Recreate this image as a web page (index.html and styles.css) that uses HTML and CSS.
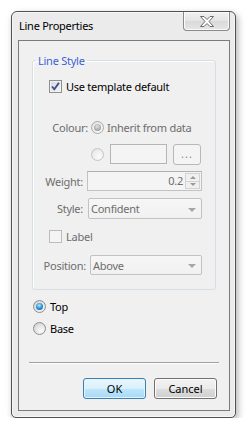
FILE: index.html
```html
<!DOCTYPE html>
<html lang="en">
  <head>
    <meta name="viewport" content="width=device-width, initial-scale=1.0" />
    <link rel="stylesheet" href="styles.css">
  </head>
  <body>
    <div class="window">
      <div class="titlebar">
        <span class="title">Line Properties</span>
        <div class="close">
          <svg width="14" height="11" viewBox="0 0 14 11">
            <polygon points="0.5,0.5 4,0.5 7,3.5 10,0.5 13.5,0.5 9,5.5 13.5,10.5 10,10.5 7,7.5 4,10.5 0.5,10.5 5,5.5"
              fill="#fff" stroke="#6b6b6b" stroke-width="1" stroke-linejoin="round" />
          </svg>
        </div>
      </div>

      <div class="client">
        <fieldset class="group">
          <legend>Line Style</legend>

          <div class="row check-row">
            <span class="checkbox">
              <svg width="11" height="11" viewBox="0 0 11 11">
                <path d="M2 5.5 L4.3 8.3 L9 1.8" fill="none" stroke="#3d528c" stroke-width="1.9" />
              </svg>
            </span>
            <span class="text">Use template default</span>
          </div>

          <div class="row colour-row">
            <span class="lbl">Colour:</span>
            <span class="radio dis on"></span>
            <span class="text dim">Inherit from data</span>
          </div>

          <div class="row custom-row">
            <span class="radio dis"></span>
            <span class="field"></span>
            <span class="tool-btn">...</span>
          </div>

          <div class="row weight-row">
            <span class="lbl">Weight:</span>
            <div class="spin">
              <span class="spin-value">0.2</span>
              <span class="spin-arrows">
                <span class="spin-up"></span>
                <span class="spin-down"></span>
              </span>
            </div>
          </div>

          <div class="row style-row">
            <span class="lbl">Style:</span>
            <div class="combo">
              <span class="combo-text">Confident</span>
              <span class="combo-arrow"></span>
            </div>
          </div>

          <div class="row label-row">
            <span class="checkbox dis"></span>
            <span class="text dim">Label</span>
          </div>

          <div class="row position-row">
            <span class="lbl">Position:</span>
            <div class="combo">
              <span class="combo-text">Above</span>
              <span class="combo-arrow"></span>
            </div>
          </div>
        </fieldset>

        <div class="radio-row top-row">
          <span class="radio on"></span>
          <span class="text">Top</span>
        </div>
        <div class="radio-row base-row">
          <span class="radio"></span>
          <span class="text">Base</span>
        </div>

        <div class="separator"></div>

        <div class="buttons">
          <button class="btn default">OK</button>
          <button class="btn">Cancel</button>
        </div>
      </div>
    </div>
  </body>
</html>
```

FILE: styles.css
```css
body {
  margin: 0;
  background: #fff;
  font-family: "Noto Sans", "Open Sans", sans-serif;
  font-size: 11px;
  letter-spacing: -0.25px;
  color: #000;
}

/* Window frame */
.window {
  margin: 11px 0 0 11px;
  width: 225px;
  height: 407px;
  box-sizing: border-box;
  border: 1px solid #515151;
  border-radius: 6px 6px 5px 5px;
  background: #ebebeb;
  padding: 0 5px 6px 6px;
  display: flex;
  flex-direction: column;
  box-shadow: inset 0 0 0 1px #f7f7f7, 2px 3px 7px rgba(0, 0, 0, 0.3);
}

.titlebar {
  height: 28px;
  flex: none;
  display: flex;
  justify-content: space-between;
  align-items: flex-start;
}

.title {
  padding: 6px 0 0 1px;
  line-height: 16px;
}

.close {
  width: 47px;
  height: 19px;
  box-sizing: border-box;
  border: 1px solid #8a8a8a;
  border-top: none;
  border-radius: 0 0 4px 4px;
  background: linear-gradient(#f1f1f1, #e4e4e4 50%, #d9d9d9 51%, #e6e6e6);
  box-shadow: inset 0 0 0 1px #fafafa;
  display: flex;
  align-items: center;
  justify-content: center;
}

.client {
  flex: 1;
  border: 1px solid #7b7b7b;
  background: #f0f0f0;
  display: flex;
  flex-direction: column;
}

/* Group box */
.group {
  margin: 12px 13px 0;
  padding: 8px 0 14px 0;
  border: 1px solid #d5dfe5;
  border-radius: 3px;
  box-shadow: inset 1px 1px 0 #fff;
  min-width: 0;
}

.group legend {
  margin-left: 3px;
  padding: 0 2px;
  line-height: 15px;
  color: #3b5fd4;
}

.row {
  display: flex;
  align-items: center;
  height: 20px;
  padding-right: 13px;
}

.text {
  line-height: 15px;
  margin-left: 4px;
}

.dim,
.lbl {
  color: #6d6d6d;
}

.lbl {
  flex: none;
  text-align: right;
  line-height: 15px;
}

.check-row {
  padding-left: 16px;
}

.colour-row {
  margin-top: 21px;
}

.colour-row .lbl {
  width: 55px;
  margin-right: 3px;
}

.colour-row .text {
  margin-left: 3px;
}

.custom-row {
  margin-top: 7px;
  padding-left: 58px;
}

.weight-row {
  margin-top: 7px;
}

.weight-row .lbl,
.style-row .lbl {
  width: 50px;
  margin-right: 4px;
}

.style-row {
  margin-top: 7px;
  height: 21px;
}

.style-row .lbl {
  margin-right: 5px;
}

.label-row {
  margin-top: 7px;
  padding-left: 16px;
}

.position-row {
  margin-top: 9px;
}

.position-row .lbl {
  width: 53px;
  margin-right: 4px;
}

/* Check boxes and radio buttons */
.checkbox {
  flex: none;
  width: 13px;
  height: 13px;
  box-sizing: border-box;
  border: 1px solid #8e8f8f;
  background: linear-gradient(135deg, #d4d7db, #f7f7f7);
  box-shadow: inset 0 0 0 1px #f2f2f2;
  display: flex;
  align-items: center;
  justify-content: center;
}

.checkbox.dis {
  border-color: #bcbcbc;
  background: #f4f4f4;
  box-shadow: none;
}

.radio {
  flex: none;
  width: 13px;
  height: 13px;
  box-sizing: border-box;
  border-radius: 50%;
  border: 1px solid #8e8f8f;
  background: radial-gradient(circle at 65% 70%, #fbfbfb, #e2e2e2 55%, #c4c4c4);
  display: flex;
  align-items: center;
  justify-content: center;
}

.radio.on::after {
  content: "";
  width: 7px;
  height: 7px;
  border-radius: 50%;
  background: radial-gradient(circle at 45% 35%, #b5ebff, #2a92d8 50%, #0c4f8c);
}

.radio.dis {
  border-color: #c4c4c4;
  background: radial-gradient(circle at 65% 70%, #fbfbfb, #ececec 60%, #dcdcdc);
}

.radio.dis.on {
  border-color: #a9a9a9;
}

.radio.dis.on::after {
  background: radial-gradient(circle at 45% 35%, #e4e4e4, #a9a9a9 60%, #8e8e8e);
}

/* Disabled inputs */
.field {
  flex: none;
  margin-left: 6px;
  width: 57px;
  height: 20px;
  box-sizing: border-box;
  border: 1px solid #b5b5b5;
  background: #f4f4f4;
}

.tool-btn {
  flex: none;
  margin-left: 6px;
  width: 28px;
  height: 21px;
  box-sizing: border-box;
  border: 1px solid #b8b8b8;
  border-radius: 3px;
  background: #f4f4f4;
  color: #8a8a8a;
  font-size: 11px;
  line-height: 17px;
  text-align: center;
  letter-spacing: 1px;
}

.spin {
  flex: 1;
  height: 20px;
  box-sizing: border-box;
  border: 1px solid #c2c2c2;
  border-top-color: #b0b0b0;
  background: #f4f4f4;
  display: flex;
  padding: 1px;
}

.spin-value {
  flex: 1;
  text-align: right;
  padding-right: 2px;
  color: #6d6d6d;
  line-height: 16px;
}

.spin-arrows {
  flex: none;
  width: 15px;
  display: flex;
  flex-direction: column;
}

.spin-up,
.spin-down {
  flex: 1;
  border: 1px solid #d3d3d3;
  background: #f0f0f0;
  display: flex;
  align-items: center;
  justify-content: center;
}

.spin-up {
  border-bottom: none;
}

.spin-up::after,
.spin-down::after {
  content: "";
  border-left: 3px solid transparent;
  border-right: 3px solid transparent;
}

.spin-up::after {
  border-bottom: 3px solid #9a9a9a;
}

.spin-down::after {
  border-top: 3px solid #9a9a9a;
}

.combo {
  flex: 1;
  height: 100%;
  box-sizing: border-box;
  border: 1px solid #c2c2c2;
  border-radius: 2px;
  background: linear-gradient(#f6f6f6, #f1f1f1);
  display: flex;
  align-items: center;
  padding: 0 5px 0 2px;
}

.combo-text {
  flex: 1;
  color: #6d6d6d;
  line-height: 15px;
}

.combo-arrow {
  flex: none;
  border-left: 4px solid transparent;
  border-right: 4px solid transparent;
  border-top: 4px solid #a6a6a6;
  margin-top: 2px;
}

/* Top / Base */
.radio-row {
  display: flex;
  align-items: center;
  height: 16px;
  padding-left: 14px;
}

.top-row {
  margin-top: 8px;
}

.base-row {
  margin-top: 6px;
}

.separator {
  margin: 26px 10px 0;
  height: 1px;
  background: #a0a0a0;
  border-bottom: 1px solid #fff;
}

.buttons {
  margin-top: 14px;
  display: flex;
  justify-content: flex-end;
  gap: 8px;
  padding-right: 12px;
}

.btn {
  width: 63px;
  height: 21px;
  box-sizing: border-box;
  border: 1px solid #707070;
  border-radius: 3px;
  background: linear-gradient(#f2f2f2, #ebebeb 50%, #dddddd 51%, #cfcfcf);
  box-shadow: inset 0 0 0 1px #fcfcfc;
  font: inherit;
  color: #000;
  padding: 0;
}

.btn.default {
  border-color: #3c7fb1;
  background: linear-gradient(#eaf6fd, #d9f0fc 50%, #bee6fd 51%, #a7d9f5);
  box-shadow: inset 0 0 0 1px #e5f4fc;
}
```
